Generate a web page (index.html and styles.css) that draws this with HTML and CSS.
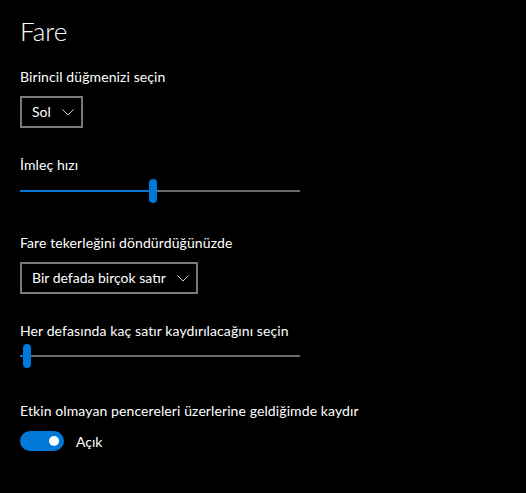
FILE: index.html
```html
<!DOCTYPE html>
<html lang="tr">
<head>
<meta charset="utf-8">
<title>Fare</title>
<link rel="stylesheet" href="styles.css">
</head>
<body>
<main class="page">
  <h1 class="title">Fare</h1>

  <div class="label">Birincil düğmenizi seçin</div>
  <div class="combo">
    <span class="combo-text">Sol</span>
    <svg class="chev" width="12" height="7" viewBox="0 0 12 7"><path d="M0.5 0.5 L6 6 L11.5 0.5" fill="none" stroke="#cfcfcf" stroke-width="1"/></svg>
  </div>

  <div class="label gap-lg">İmleç hızı</div>
  <div class="slider slider-1">
    <div class="track"><div class="fill" style="width:129px"></div></div>
    <div class="thumb" style="left:129px"></div>
  </div>

  <div class="label gap-xl">Fare tekerleğini döndürdüğünüzde</div>
  <div class="combo">
    <span class="combo-text">Bir defada birçok satır</span>
    <svg class="chev" width="12" height="7" viewBox="0 0 12 7"><path d="M0.5 0.5 L6 6 L11.5 0.5" fill="none" stroke="#cfcfcf" stroke-width="1"/></svg>
  </div>

  <div class="label gap-lg">Her defasında kaç satır kaydırılacağını seçin</div>
  <div class="slider slider-2">
    <div class="track"><div class="fill" style="width:3px"></div></div>
    <div class="thumb" style="left:3px"></div>
  </div>

  <div class="label gap-xxl">Etkin olmayan pencereleri üzerlerine geldiğimde kaydır</div>
  <div class="toggle-row">
    <div class="toggle"><div class="knob"></div></div>
    <span class="toggle-text">Açık</span>
  </div>
</main>
</body>
</html>
```

FILE: styles.css
```css
html, body {
  margin: 0;
  padding: 0;
  background: #000;
}
body {
  width: 526px;
  height: 493px;
  overflow: hidden;
  color: #fff;
  font-family: "Lato", "Open Sans", "DejaVu Sans", sans-serif;
}
.page {
  padding: 0 20px;
}
.title {
  margin: 11px 0 0 0;
  font-size: 26px;
  font-weight: 300;
  line-height: 40px;
}
.label {
  margin-top: 16px;
  font-size: 14px;
  line-height: 20px;
  letter-spacing: 0.1px;
}
.gap-lg { margin-top: 27px; }
.gap-xl { margin-top: 30px; }
.gap-xxl { margin-top: 33px; }

.combo {
  margin-top: 9px;
  box-sizing: border-box;
  height: 32px;
  display: inline-flex;
  align-items: center;
  gap: 11px;
  padding: 0 7px 0 10px;
  border: 2px solid #7a7a7a;
  font-size: 14px;
}
.combo-text {
  line-height: 20px;
}
.chev { display: block; }

.slider {
  position: relative;
  width: 280px;
  height: 24px;
  margin-top: 4px;
}
.slider-2 { margin-top: 3px; }
.track {
  position: absolute;
  left: 0;
  right: 0;
  top: 11px;
  height: 2px;
  background: #6b6b6b;
}
.fill {
  height: 100%;
  background: #0078d7;
}
.thumb {
  position: absolute;
  top: 0;
  width: 8px;
  height: 24px;
  border-radius: 4px;
  background: #0078d7;
}

.toggle-row {
  margin-top: 9px;
  display: flex;
  align-items: center;
  gap: 12px;
}
.toggle {
  width: 44px;
  height: 20px;
  border-radius: 10px;
  background: #0078d7;
  display: flex;
  align-items: center;
  justify-content: flex-end;
  padding-right: 5px;
  box-sizing: border-box;
}
.knob {
  width: 10px;
  height: 10px;
  border-radius: 50%;
  background: #fff;
}
.toggle-text {
  font-size: 14px;
  line-height: 20px;
  margin-top: 2px;
}
```
